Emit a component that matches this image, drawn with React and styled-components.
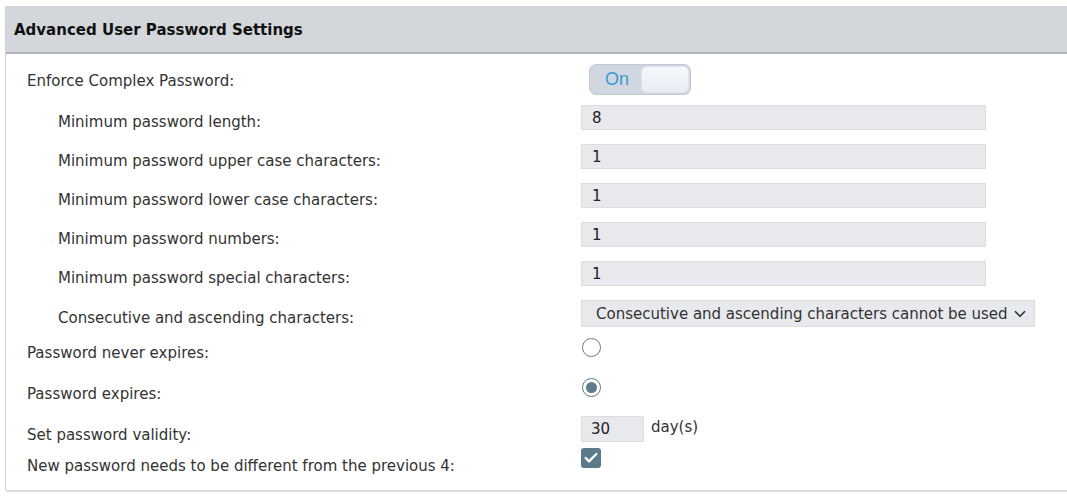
import styled, { createGlobalStyle } from "styled-components";
import { ChevronDown, Check } from "lucide-react";

const GlobalStyle = createGlobalStyle`
  html, body {
    margin: 0;
    padding: 0;
    background: #ffffff;
    font-family: "DejaVu Sans", Verdana, sans-serif;
    color: #333333;
  }
`;

const Page = styled.div`
  padding: 6px 0 0 5px;
  width: 1067px;
  box-sizing: border-box;
  overflow: hidden;
`;

const Panel = styled.section`
  border-top: 1px solid #d4d7da;
  border-left: 1px solid #d0d3d6;
  border-bottom: 2px solid #d9dbdd;
  border-bottom-left-radius: 3px;
  width: 1080px;
  padding-bottom: 11px;
`;

const PanelHeader = styled.header`
  height: 45px;
  display: flex;
  align-items: center;
  padding-left: 8px;
  background: #d3d7db;
  border-bottom: 2px solid #b0b4b8;
  font-size: 15px;
  font-weight: bold;
  color: #111111;
`;

const Body = styled.div`
  padding: 5px 0 0 21px;
`;

const Row = styled.div`
  display: grid;
  grid-template-columns: 554px 1fr;
  align-items: start;
  height: ${(p) => p.$h}px;
`;

const Label = styled.div`
  padding-top: ${(p) => p.$top}px;
  padding-left: ${(p) => (p.$indent ? 31 : 0)}px;
  font-size: 15px;
  line-height: 20px;
  white-space: nowrap;
`;

const Control = styled.div`
  display: flex;
  align-items: center;
  gap: 7px;
  padding-top: ${(p) => p.$top || 0}px;
`;

const Toggle = styled.div`
  width: 84px;
  height: 29px;
  border: 1px solid #c2cad5;
  border-radius: 7px;
  background: #d0d7e1;
  display: flex;
  align-items: center;
  justify-content: space-between;
  padding: 0 1px 0 15px;
  box-sizing: content-box;
  margin-left: 8px;
`;

const ToggleText = styled.span`
  font-family: "Liberation Sans", Arial, sans-serif;
  font-size: 18px;
  color: #3b9ccf;
`;

const Knob = styled.span`
  width: 48px;
  height: 27px;
  border-radius: 6px;
  background: linear-gradient(#f6f8fb, #e8edf4);
  border: 1px solid #dfe4ec;
  box-sizing: border-box;
`;

const Field = styled.div`
  width: ${(p) => p.$w}px;
  height: ${(p) => p.$hgt || 25}px;
  box-sizing: border-box;
  background: #e8e9ec;
  border: 1px solid #dcdddf;
  font-size: 15px;
  display: flex;
  align-items: center;
  padding-left: ${(p) => p.$pad || 10}px;
  color: #222222;
`;

const SelectBox = styled(Field)`
  justify-content: space-between;
  padding-right: 5px;
  color: #333333;
`;

const Radio = styled.span`
  width: 19px;
  height: 19px;
  border-radius: 50%;
  box-sizing: border-box;
  border: 1.5px solid ${(p) => (p.$on ? "#5e7a8b" : "#767676")};
  display: flex;
  align-items: center;
  justify-content: center;
  margin-left: 1px;

  &::after {
    content: "";
    display: ${(p) => (p.$on ? "block" : "none")};
    width: 11px;
    height: 11px;
    border-radius: 50%;
    background: #5e7a8b;
  }
`;

const Unit = styled.span`
  font-size: 15px;
  padding-bottom: 4px;
`;

const CheckBox = styled.span`
  width: 20px;
  height: 20px;
  border-radius: 3px;
  background: #5d7a8c;
  display: flex;
  align-items: center;
  justify-content: center;
  color: #ffffff;
`;

const numberRows = [
  ["Minimum password length:", "8"],
  ["Minimum password upper case characters:", "1"],
  ["Minimum password lower case characters:", "1"],
  ["Minimum password numbers:", "1"],
  ["Minimum password special characters:", "1"],
];

export default function App() {
  return (
    <>
      <GlobalStyle />
      <Page>
        <Panel>
          <PanelHeader>Advanced User Password Settings</PanelHeader>
          <Body>
            <Row $h={46}>
              <Label $top={12}>Enforce Complex Password:</Label>
              <Control $top={5}>
                <Toggle>
                  <ToggleText>On</ToggleText>
                  <Knob />
                </Toggle>
              </Control>
            </Row>
            {numberRows.map(([label, value]) => (
              <Row $h={39} key={label}>
                <Label $indent $top={7}>
                  {label}
                </Label>
                <Control>
                  <Field $w={405}>{value}</Field>
                </Control>
              </Row>
            ))}
            <Row $h={38}>
              <Label $indent $top={8}>
                Consecutive and ascending characters:
              </Label>
              <Control $top={-1}>
                <SelectBox $w={454} $hgt={27} $pad={14}>
                  Consecutive and ascending characters cannot be used
                  <ChevronDown size={18} strokeWidth={2.2} color="#333" />
                </SelectBox>
              </Control>
            </Row>
            <Row $h={40}>
              <Label $top={5}>Password never expires:</Label>
              <Control>
                <Radio />
              </Control>
            </Row>
            <Row $h={38}>
              <Label $top={6}>Password expires:</Label>
              <Control>
                <Radio $on />
              </Control>
            </Row>
            <Row $h={32}>
              <Label $top={9}>Set password validity:</Label>
              <Control>
                <Field $w={63} $hgt={26} $pad={9}>
                  30
                </Field>
                <Unit>day(s)</Unit>
              </Control>
            </Row>
            <Row $h={31}>
              <Label $top={8}>New password needs to be different from the previous 4:</Label>
              <Control>
                <CheckBox>
                  <Check size={16} strokeWidth={3.5} />
                </CheckBox>
              </Control>
            </Row>
          </Body>
        </Panel>
      </Page>
    </>
  );
}
